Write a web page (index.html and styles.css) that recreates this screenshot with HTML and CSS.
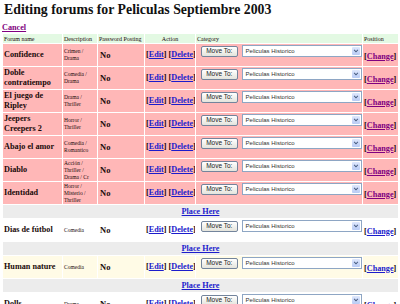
FILE: index.html
```html
<!DOCTYPE html>
<html lang="es">
<head>
    <meta charset="UTF-8">
    <title>Editing forums</title>
    <link rel="stylesheet" href="styles.css">
</head>
<body>
    <h1>Editing forums for Peliculas Septiembre 2003</h1>
    <a class="cancel" href="#">Cancel</a>

    <table class="forums">
        <colgroup>
            <col class="c-name"><col class="c-desc"><col class="c-pass"><col class="c-action"><col class="c-cat"><col class="c-pos">
        </colgroup>
        <tr class="head">
            <td>Forum name</td>
            <td>Description</td>
            <td>Password Posting</td>
            <td class="center">Action</td>
            <td>Category</td>
            <td>Position</td>
        </tr>

        <tr class="pink">
            <td class="name">Confidence</td>
            <td class="desc">Crimen / Drama</td>
            <td class="pass">No</td>
            <td class="action">[<a href="#">Edit</a>] [<a href="#">Delete</a>]</td>
            <td class="cat"><div class="move"><button>Move To:</button><div class="select"><span>Peliculas Historico</span><i><svg viewBox="0 0 8 8" width="6" height="6"><path d="M1.5 2.5 L4 5 L6.5 2.5" stroke="#4d6185" stroke-width="1.4" fill="none"/></svg></i></div></div></td>
            <td class="pos">[<a class="visited" href="#">Change</a>]</td>
        </tr>
        <tr class="pink">
            <td class="name">Doble contratiempo</td>
            <td class="desc">Comedia / Drama</td>
            <td class="pass">No</td>
            <td class="action">[<a href="#">Edit</a>] [<a href="#">Delete</a>]</td>
            <td class="cat"><div class="move"><button>Move To:</button><div class="select"><span>Peliculas Historico</span><i><svg viewBox="0 0 8 8" width="6" height="6"><path d="M1.5 2.5 L4 5 L6.5 2.5" stroke="#4d6185" stroke-width="1.4" fill="none"/></svg></i></div></div></td>
            <td class="pos">[<a class="visited" href="#">Change</a>]</td>
        </tr>
        <tr class="pink">
            <td class="name">El juego de Ripley</td>
            <td class="desc">Drama / Thriller</td>
            <td class="pass">No</td>
            <td class="action">[<a href="#">Edit</a>] [<a href="#">Delete</a>]</td>
            <td class="cat"><div class="move"><button>Move To:</button><div class="select"><span>Peliculas Historico</span><i><svg viewBox="0 0 8 8" width="6" height="6"><path d="M1.5 2.5 L4 5 L6.5 2.5" stroke="#4d6185" stroke-width="1.4" fill="none"/></svg></i></div></div></td>
            <td class="pos">[<a class="visited" href="#">Change</a>]</td>
        </tr>
        <tr class="pink">
            <td class="name">Jeepers Creepers 2</td>
            <td class="desc">Horror / Thriller</td>
            <td class="pass">No</td>
            <td class="action">[<a href="#">Edit</a>] [<a href="#">Delete</a>]</td>
            <td class="cat"><div class="move"><button>Move To:</button><div class="select"><span>Peliculas Historico</span><i><svg viewBox="0 0 8 8" width="6" height="6"><path d="M1.5 2.5 L4 5 L6.5 2.5" stroke="#4d6185" stroke-width="1.4" fill="none"/></svg></i></div></div></td>
            <td class="pos">[<a class="visited" href="#">Change</a>]</td>
        </tr>
        <tr class="pink">
            <td class="name">Abajo el amor</td>
            <td class="desc">Comedia / Romantico</td>
            <td class="pass">No</td>
            <td class="action">[<a href="#">Edit</a>] [<a href="#">Delete</a>]</td>
            <td class="cat"><div class="move"><button>Move To:</button><div class="select"><span>Peliculas Historico</span><i><svg viewBox="0 0 8 8" width="6" height="6"><path d="M1.5 2.5 L4 5 L6.5 2.5" stroke="#4d6185" stroke-width="1.4" fill="none"/></svg></i></div></div></td>
            <td class="pos">[<a class="visited" href="#">Change</a>]</td>
        </tr>
        <tr class="pink">
            <td class="name">Diablo</td>
            <td class="desc">Acción / Thriller / Drama / Cr</td>
            <td class="pass">No</td>
            <td class="action">[<a href="#">Edit</a>] [<a href="#">Delete</a>]</td>
            <td class="cat"><div class="move"><button>Move To:</button><div class="select"><span>Peliculas Historico</span><i><svg viewBox="0 0 8 8" width="6" height="6"><path d="M1.5 2.5 L4 5 L6.5 2.5" stroke="#4d6185" stroke-width="1.4" fill="none"/></svg></i></div></div></td>
            <td class="pos">[<a class="visited" href="#">Change</a>]</td>
        </tr>
        <tr class="pink">
            <td class="name">Identidad</td>
            <td class="desc">Horror / Misterio / Thriller</td>
            <td class="pass">No</td>
            <td class="action">[<a href="#">Edit</a>] [<a href="#">Delete</a>]</td>
            <td class="cat"><div class="move"><button>Move To:</button><div class="select"><span>Peliculas Historico</span><i><svg viewBox="0 0 8 8" width="6" height="6"><path d="M1.5 2.5 L4 5 L6.5 2.5" stroke="#4d6185" stroke-width="1.4" fill="none"/></svg></i></div></div></td>
            <td class="pos">[<a class="visited" href="#">Change</a>]</td>
        </tr>

        <tr class="place"><td colspan="6"><a href="#">Place Here</a></td></tr>

        <tr class="plain">
            <td class="name">Dias de fútbol</td>
            <td class="desc">Comedia</td>
            <td class="pass">No</td>
            <td class="action">[<a href="#">Edit</a>] [<a href="#">Delete</a>]</td>
            <td class="cat"><div class="move"><button>Move To:</button><div class="select"><span>Peliculas Historico</span><i><svg viewBox="0 0 8 8" width="6" height="6"><path d="M1.5 2.5 L4 5 L6.5 2.5" stroke="#4d6185" stroke-width="1.4" fill="none"/></svg></i></div></div></td>
            <td class="pos">[<a href="#">Change</a>]</td>
        </tr>

        <tr class="place"><td colspan="6"><a href="#">Place Here</a></td></tr>

        <tr class="cream">
            <td class="name">Human nature</td>
            <td class="desc">Comedia</td>
            <td class="pass">No</td>
            <td class="action">[<a href="#">Edit</a>] [<a href="#">Delete</a>]</td>
            <td class="cat"><div class="move"><button>Move To:</button><div class="select"><span>Peliculas Historico</span><i><svg viewBox="0 0 8 8" width="6" height="6"><path d="M1.5 2.5 L4 5 L6.5 2.5" stroke="#4d6185" stroke-width="1.4" fill="none"/></svg></i></div></div></td>
            <td class="pos">[<a href="#">Change</a>]</td>
        </tr>

        <tr class="place"><td colspan="6"><a href="#">Place Here</a></td></tr>

        <tr class="plain">
            <td class="name">Dolls</td>
            <td class="desc">Drama</td>
            <td class="pass">No</td>
            <td class="action">[<a href="#">Edit</a>] [<a href="#">Delete</a>]</td>
            <td class="cat"><div class="move"><button>Move To:</button><div class="select"><span>Peliculas Historico</span><i><svg viewBox="0 0 8 8" width="6" height="6"><path d="M1.5 2.5 L4 5 L6.5 2.5" stroke="#4d6185" stroke-width="1.4" fill="none"/></svg></i></div></div></td>
            <td class="pos">[<a href="#">Change</a>]</td>
        </tr>
    </table>
</body>
</html>
```

FILE: styles.css
```css
body {
    margin: 0;
    padding: 0 2px;
    font-family: "Liberation Serif", "Times New Roman", serif;
    color: #111;
    background: #fff;
    overflow: hidden;
}

h1 {
    font-size: 13.8px;
    margin: 3px 0 0 2px;
    line-height: 14px;
}

.cancel {
    display: block;
    margin: 6px 0 0 0;
    font-size: 8.2px;
    font-weight: bold;
    line-height: 10px;
    color: #800080;
}

.forums {
    border-collapse: separate;
    border-spacing: 1px 1.5px;
    table-layout: fixed;
    width: 396px;
    margin-top: 0;
}

.c-name { width: 59px; }
.c-desc { width: 34px; }
.c-pass { width: 46px; }
.c-action { width: 50px; }
.c-cat { width: 166px; }
.c-pos { width: 35px; }

td {
    padding: 0 1px;
    vertical-align: middle;
    line-height: 10px;
    overflow: hidden;
    color: #1a0a0a;
}

.head td {
    background: #e3f9e3;
    font-size: 6px;
    height: 9px;
    line-height: 8px;
}

.center {
    text-align: center;
}

.pink td {
    background: #ffb7b7;
}

.cream td {
    background: #fffbe6;
}

.pink, .cream, .plain {
    height: 22px;
}

.name {
    font-size: 8.2px;
    font-weight: bold;
}

.desc {
    font-size: 5.5px;
    line-height: 7px;
}

.pass {
    font-size: 8.5px;
    font-weight: bold;
    padding-left: 2px;
}

.action {
    font-size: 8.2px;
    font-weight: bold;
    white-space: nowrap;
    text-align: center;
}

.action a {
    color: #1c1ccc;
}

.pos {
    font-size: 8.2px;
    font-weight: bold;
    white-space: nowrap;
    padding-top: 3px;
}

.pos a {
    color: #1c1ccc;
}

.pos a.visited {
    color: #800080;
}

.cat {
    vertical-align: top;
    padding: 1px 0 0 5px;
}

.move {
    display: flex;
    align-items: center;
    gap: 4px;
    height: 12px;
}

.move button {
    font-family: "Liberation Sans", Arial, sans-serif;
    font-size: 6.5px;
    line-height: 8px;
    height: 11px;
    width: 37px;
    padding: 0;
    border: 1px solid #73849c;
    border-radius: 2px;
    background: linear-gradient(#ffffff, #e4e4dc);
    color: #222;
}

.select {
    display: flex;
    align-items: center;
    justify-content: space-between;
    width: 120px;
    height: 10px;
    border: 1px solid #8ea6c4;
    background: #fff;
    font-family: "Liberation Sans", Arial, sans-serif;
    font-size: 6px;
    line-height: 8px;
    color: #333;
}

.select span {
    padding-left: 3px;
}

.select i {
    display: flex;
    align-items: center;
    justify-content: center;
    width: 8px;
    height: 8px;
    margin-right: 1px;
    background: linear-gradient(#dfe8fd, #b8cbf5);
    border-radius: 1px;
}

.place td {
    background: #ececec;
    text-align: center;
    font-size: 8.2px;
    font-weight: bold;
    height: 13px;
    line-height: 11px;
}

.place a {
    color: #1c1ccc;
}
```
